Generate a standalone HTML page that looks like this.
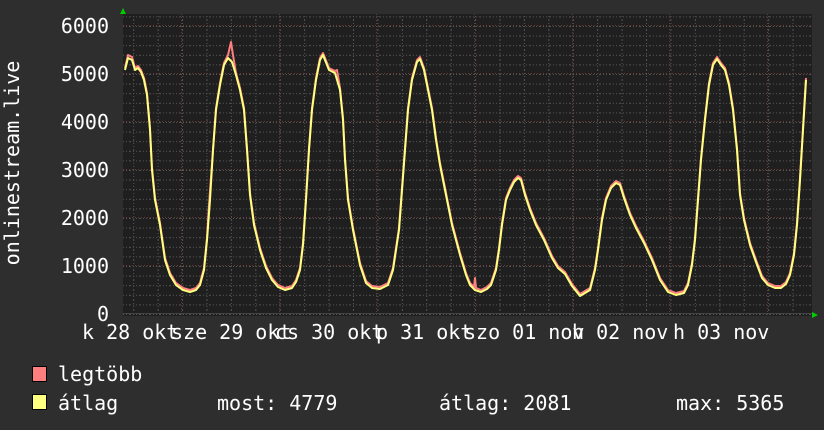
<!DOCTYPE html>
<html><head><meta charset="utf-8"><style>
html,body{margin:0;padding:0;background:#2e2e2e;}
svg{display:block;}
text{font-family:"DejaVu Sans Mono","Liberation Mono",monospace;font-size:20px;fill:#fff;}
</style></head><body>
<svg width="824" height="430" viewBox="0 0 824 430" xmlns="http://www.w3.org/2000/svg">
<defs>
<pattern id="minh" x="0" y="16.4" width="10" height="9.6" patternUnits="userSpaceOnUse"><line x1="0" y1="0.5" x2="10" y2="0.5" stroke="#555" stroke-dasharray="1,2"/></pattern>
<pattern id="minv" x="11.1" y="0" width="24.42" height="10" patternUnits="userSpaceOnUse"><line x1="0.5" y1="0" x2="0.5" y2="10" stroke="#555" stroke-dasharray="1,2"/></pattern>
</defs>
<rect x="123" y="14" width="689" height="302" fill="#1f1f1f"/>
<rect x="123" y="14" width="689" height="302" fill="url(#minh)"/>
<rect x="123" y="14" width="689" height="302" fill="url(#minv)"/>
<g stroke="#6a3a3a" stroke-dasharray="1,2">
<line x1="123" x2="812" y1="25.5" y2="25.5"/><line x1="123" x2="812" y1="73.5" y2="73.5"/><line x1="123" x2="812" y1="121.5" y2="121.5"/><line x1="123" x2="812" y1="169.5" y2="169.5"/><line x1="123" x2="812" y1="217.5" y2="217.5"/><line x1="123" x2="812" y1="265.5" y2="265.5"/>
<line y1="14" y2="316" x1="181.5" x2="181.5"/><line y1="14" y2="316" x1="279.5" x2="279.5"/><line y1="14" y2="316" x1="376.5" x2="376.5"/><line y1="14" y2="316" x1="474.5" x2="474.5"/><line y1="14" y2="316" x1="572.5" x2="572.5"/><line y1="14" y2="316" x1="669.5" x2="669.5"/><line y1="14" y2="316" x1="767.5" x2="767.5"/>
</g>
<line x1="123" x2="812" y1="313.5" y2="313.5" stroke="#444"/>
<polygon points="120,14 126,14 123,8" fill="#0c0"/>
<polygon points="812,312 812,318 818,315" fill="#0c0"/>
<g fill="none" stroke-linejoin="round" stroke-width="2">
<polyline stroke="#ff7f7f" points="125,68 128,55 132,57 135,68 138,66 141,70 144,78 147,93 150,128 152,168 155,198 160,223 165,258 170,273 176,283 183,288 190,290 196,288 200,283 204,268 207,238 209,205 213,150 216,108 220,83 224,63 228,55 231,42 233,55 236,73 240,88 244,108 247,148 250,193 254,223 260,248 266,266 272,278 278,285 285,288 292,286 296,280 300,268 303,243 306,198 309,148 312,108 316,78 320,58 323,53 329,68 335,71 337,70 340,88 343,118 345,158 348,198 353,228 360,263 366,281 372,286 380,287 388,283 393,268 396,248 399,228 402,188 405,148 408,108 412,78 417,60 420,57 424,68 428,88 432,108 436,138 440,163 446,193 452,223 460,253 466,273 470,283 474,287 475,278 476,288 481,290 487,287 491,283 496,268 499,248 502,223 506,198 510,188 514,180 518,176 521,178 525,193 530,208 536,223 544,238 552,256 558,266 565,272 572,284 580,294 590,288 595,268 598,248 602,218 606,198 611,186 616,181 620,183 624,196 630,213 636,226 644,241 652,258 660,278 668,290 676,293 684,291 688,283 692,263 695,238 698,198 701,158 705,118 709,83 713,63 717,57 721,63 725,68 729,83 733,108 737,148 740,193 744,218 750,243 756,260 762,276 768,283 775,286 781,286 786,282 790,273 794,253 797,223 800,178 803,128 806,78"/>
<polyline stroke="#ffff80" points="125,70 128,58 132,60 135,70 138,68 141,72 144,80 147,95 150,130 152,170 155,200 160,225 165,260 170,275 176,285 183,290 190,292 196,290 200,285 204,270 207,240 210,200 213,150 216,110 220,85 224,65 228,58 232,62 236,75 240,90 244,110 247,150 250,195 254,225 260,250 266,268 272,280 278,287 285,290 292,288 296,282 300,270 303,245 306,200 309,150 312,110 316,80 320,60 323,55 329,70 335,73 340,90 343,120 345,160 348,200 353,230 360,265 366,283 372,288 380,289 388,285 393,270 396,250 399,230 402,190 405,150 408,110 412,80 417,62 420,59 424,70 428,90 432,110 436,140 440,165 446,195 452,225 460,255 466,275 470,285 475,290 481,292 487,289 491,285 496,270 499,250 502,225 506,200 510,190 514,182 518,178 521,180 525,195 530,210 536,225 544,240 552,258 558,268 565,274 572,286 580,296 590,290 595,270 598,250 602,220 606,200 611,188 616,183 620,185 624,198 630,215 636,228 644,243 652,260 660,280 668,292 676,295 684,293 688,285 692,265 695,240 698,200 701,160 705,120 709,85 713,65 717,59 721,65 725,70 729,85 733,110 737,150 740,195 744,220 750,245 756,262 762,278 768,285 775,288 781,288 786,284 790,275 794,255 797,225 800,180 803,130 806,80"/>
</g>
<g text-anchor="end">
<text x="109" y="33">6000</text><text x="109" y="81">5000</text><text x="109" y="129">4000</text><text x="109" y="177">3000</text><text x="109" y="225">2000</text><text x="109" y="273">1000</text><text x="109" y="321">0</text>
</g>
<text transform="translate(19,163) rotate(-90)" text-anchor="middle">onlinestream.live</text>
<text x="82" y="339">k 28 okt</text>
<text x="171" y="339">sze 29 okt</text>
<text x="275" y="339">cs 30 okt</text>
<text x="376" y="339">p 31 okt</text>
<text x="464" y="339">szo 01 nov</text>
<text x="572" y="339">h 02 nov</text>
<text x="673" y="339">h 03 nov</text>
<rect x="32.5" y="366.5" width="14" height="15" fill="#ff7f7f" stroke="#000"/>
<rect x="32.5" y="394.5" width="14" height="15" fill="#ffff80" stroke="#000"/>
<text x="58" y="381">legtöbb</text>
<text x="58" y="410">átlag</text>
<text x="217" y="410">most: 4779</text>
<text x="439" y="410">átlag: 2081</text>
<text x="676" y="410">max: 5365</text>
</svg>
</body></html>
